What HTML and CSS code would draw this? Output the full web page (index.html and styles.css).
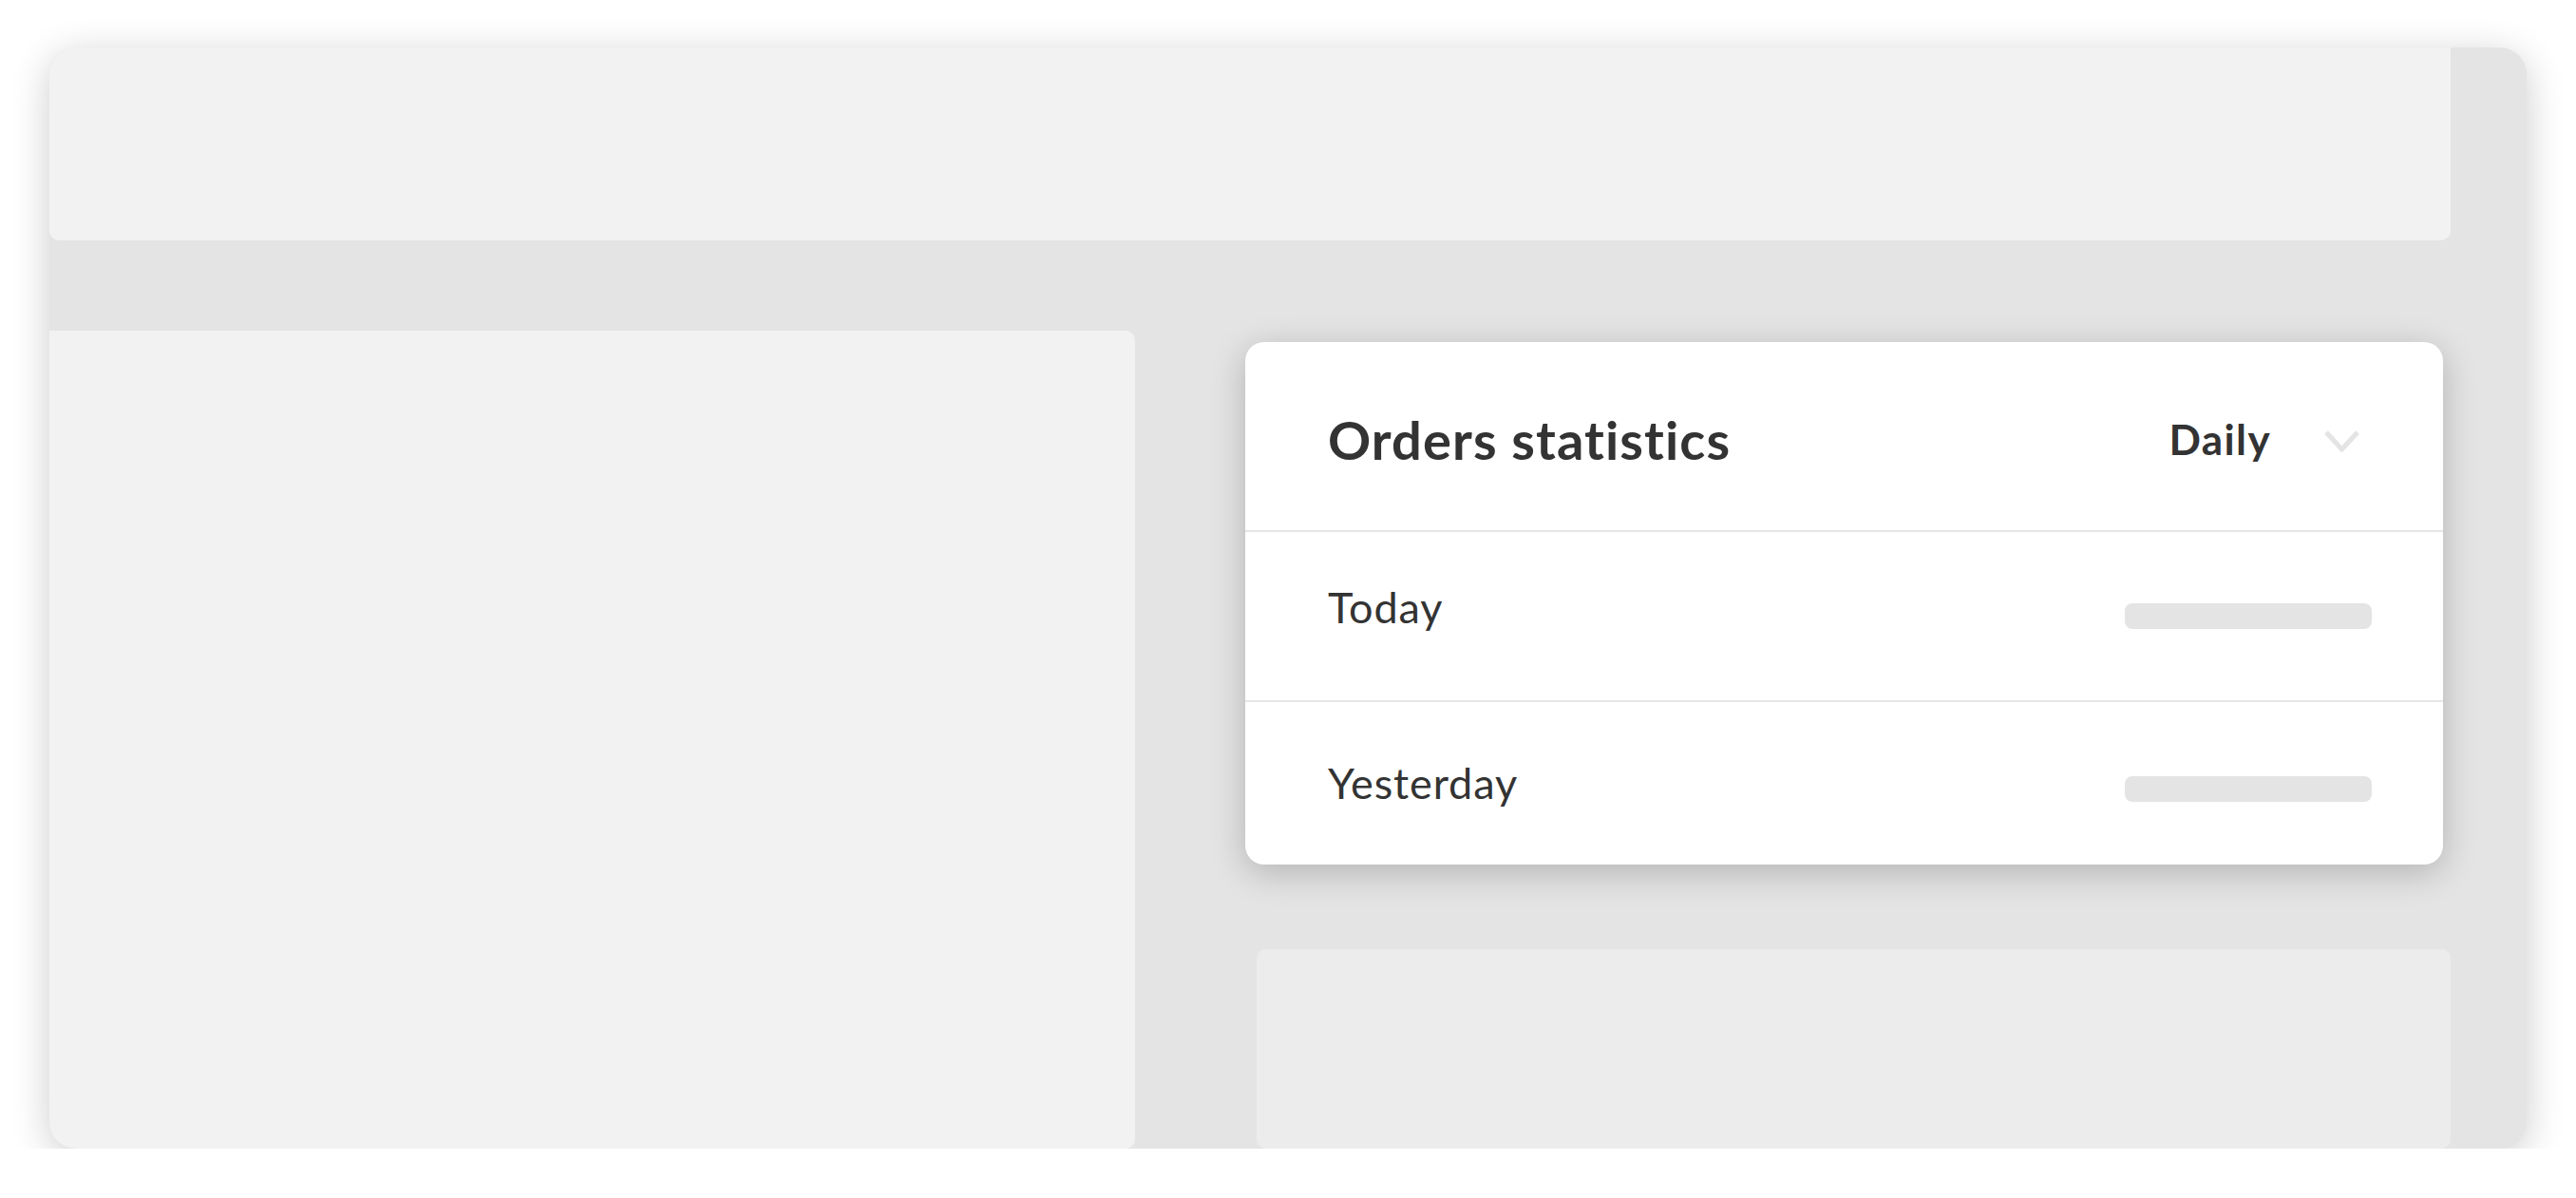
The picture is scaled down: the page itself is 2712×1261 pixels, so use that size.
FILE: index.html
```html
<!DOCTYPE html>
<html lang="en">
<head>
<meta charset="utf-8">
<title>Orders statistics</title>
<link rel="stylesheet" href="styles.css">
</head>
<body>
<div class="frame">
  <div class="topbar"></div>
  <div class="main">
    <div class="side-panel"></div>
    <div class="right-col">
      <div class="card">
        <div class="card-head">
          <h2 class="card-title">Orders statistics</h2>
          <div class="period">
            <span class="period-label">Daily</span>
            <svg class="chevron" width="37" height="23" viewBox="0 0 37 23" aria-hidden="true">
              <polyline points="2,2 18.5,20 35,2" fill="none" stroke="#e4e4e4" stroke-width="5" stroke-linejoin="miter"/>
            </svg>
          </div>
        </div>
        <div class="stat-row">
          <span class="stat-label">Today</span>
          <span class="skeleton"></span>
        </div>
        <div class="stat-row last">
          <span class="stat-label">Yesterday</span>
          <span class="skeleton"></span>
        </div>
      </div>
      <div class="bottom-panel"></div>
    </div>
  </div>
</div>
</body>
</html>
```

FILE: styles.css
```css
* { box-sizing: border-box; }

html, body {
  margin: 0;
  padding: 0;
  background: #ffffff;
}

body {
  font-family: Lato, "Open Sans", "Liberation Sans", sans-serif;
  color: #333333;
  padding: 50px 52px 0 52px;
}

.frame {
  width: 2608px;
  height: 1159px;
  background: #e4e4e4;
  border-radius: 28px;
  overflow: hidden;
  box-shadow: 0 8px 40px rgba(0, 0, 0, 0.2);
  display: flex;
  flex-direction: column;
}

.topbar {
  height: 203px;
  margin-right: 80px;
  background: #f2f2f2;
  border-radius: 0 0 10px 10px;
  flex: none;
}

.main {
  flex: 1;
  display: flex;
  margin-top: 95px;
  min-height: 0;
}

.side-panel {
  width: 1143px;
  flex: none;
  background: #f2f2f2;
  border-radius: 0 10px 10px 0;
}

.right-col {
  flex: 1;
  display: flex;
  flex-direction: column;
  padding: 12px 80px 0 116px;
  min-width: 0;
}

.card {
  width: 1261px;
  height: 550px;
  background: #ffffff;
  border-radius: 20px;
  box-shadow: 0 8px 36px rgba(0, 0, 0, 0.22);
  display: flex;
  flex-direction: column;
  flex: none;
}

.card-head {
  height: 200px;
  border-bottom: 2px solid #e6e6e6;
  display: flex;
  align-items: center;
  justify-content: space-between;
  padding: 6px 88px 0 87px;
}

.card-title {
  margin: 0;
  font-size: 56px;
  font-weight: 700;
  letter-spacing: 1.1px;
  color: #333333;
}

.period {
  display: flex;
  align-items: center;
  gap: 56px;
}

.period-label {
  font-size: 44px;
  font-weight: 700;
  letter-spacing: 1.4px;
  color: #333333;
}

.chevron {
  display: block;
  margin-top: 4px;
}

.stat-row {
  height: 179px;
  border-bottom: 2px solid #e6e6e6;
  display: flex;
  align-items: center;
  justify-content: space-between;
  padding: 0 75px 0 87px;
}

.stat-row.last {
  flex: 1;
  height: auto;
  border-bottom: none;
  padding-top: 12px;
}

.stat-label {
  font-size: 45px;
  font-weight: 400;
  letter-spacing: 0.9px;
  color: #333333;
  margin-bottom: 20px;
}

.stat-row.last .stat-label {
  margin-bottom: 14px;
}

.skeleton {
  width: 260px;
  height: 27px;
  background: #e4e4e4;
  border-radius: 8px;
}

.bottom-panel {
  flex: 1;
  margin: 89px 0 0 12px;
  background: #ececec;
  border-radius: 10px;
}
```
